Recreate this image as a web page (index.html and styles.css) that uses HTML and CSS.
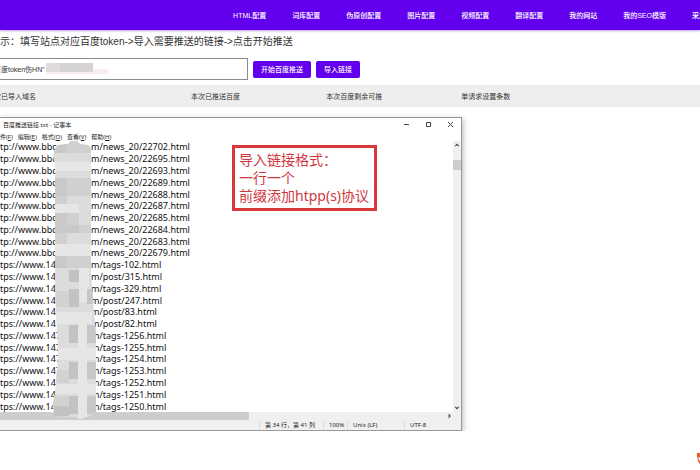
FILE: index.html
```html
<!DOCTYPE html>
<html lang="zh-CN">
  <head>
    <meta charset="UTF-8" />
    <meta name="viewport" content="width=device-width, initial-scale=1.0" />
    <title>百度推送</title>
    <link rel="stylesheet" href="styles.css">
  </head>
  <body>
    <nav class="topbar">
      <a href="#">HTML配置</a>
      <a href="#">词库配置</a>
      <a href="#">伪原创配置</a>
      <a href="#">图片配置</a>
      <a href="#">视频配置</a>
      <a href="#">翻译配置</a>
      <a href="#">我的网站</a>
      <a href="#">我的SEO模版</a>
      <a href="#">采集</a>
    </nav>

    <main class="page">
      <p class="tip">示：填写站点对应百度token-&gt;导入需要推送的链接-&gt;点击开始推送</p>

      <form class="push-form">
        <div class="token-box">
          <input type="text" class="token-input" aria-label="百度token" value="百度token伤HN&quot;" spellcheck="false" />
          <svg class="token-mask" viewBox="0 0 62 14" aria-hidden="true">
            <rect x="0" y="7" width="62" height="5" fill="#f8edf3" />
            <rect x="0" y="1" width="47" height="9" fill="#d6d3d6" />
            <rect x="0" y="1" width="14" height="9" fill="#dedadd" />
          </svg>
        </div>
        <button type="button">开始百度推送</button>
        <button type="button">导入链接</button>
      </form>

      <table class="stats">
        <thead>
          <tr>
            <th>次已导入域名</th>
            <th>本次已推送百度</th>
            <th>本次百度剩余可推</th>
            <th>单请求设置条数</th>
          </tr>
        </thead>
      </table>

      <section class="notepad">
        <header class="titlebar">
          <span class="title">百度推送链接.txt - 记事本</span>
          <button type="button" aria-label="最小化"><svg viewBox="0 0 7 7"><path d="M1 3.500h5" /></svg></button>
          <button type="button" aria-label="最大化"><svg viewBox="0 0 7 7"><path d="M1.500 1.500h4v4h-4z" /></svg></button>
          <button type="button" aria-label="关闭"><svg viewBox="0 0 7 7"><path d="M1 1l5 5M6 1l-5 5" /></svg></button>
        </header>
        <div class="menubar">
          <a href="#">件(<u>F</u>)</a>
          <a href="#">编辑(<u>E</u>)</a>
          <a href="#">格式(<u>O</u>)</a>
          <a href="#">查看(<u>V</u>)</a>
          <a href="#">帮助(<u>H</u>)</a>
        </div>
        <div class="editor">
          <ul class="urls">
            <li><span>tp://www.bbc</span>m/news_20/22702.html</li>
            <li><span>tp://www.bbc</span>m/news_20/22695.html</li>
            <li><span>tp://www.bbc</span>m/news_20/22693.html</li>
            <li><span>tp://www.bbc</span>m/news_20/22689.html</li>
            <li><span>tp://www.bbc</span>m/news_20/22688.html</li>
            <li><span>tp://www.bbc</span>m/news_20/22687.html</li>
            <li><span>tp://www.bbc</span>m/news_20/22685.html</li>
            <li><span>tp://www.bbc</span>m/news_20/22684.html</li>
            <li><span>tp://www.bbc</span>m/news_20/22683.html</li>
            <li><span>tp://www.bbc</span>m/news_20/22679.html</li>
            <li><span>tps://www.14</span>m/tags-102.html</li>
            <li><span>tps://www.14</span>m/post/315.html</li>
            <li><span>tps://www.14</span>m/tags-329.html</li>
            <li><span>tps://www.14</span>m/post/247.html</li>
            <li><span>tps://www.14</span>m/post/83.html</li>
            <li><span>tps://www.14</span>m/post/82.html</li>
            <li><span>tps://www.147</span>m/tags-1256.html</li>
            <li><span>tps://www.147</span>m/tags-1255.html</li>
            <li><span>tps://www.147</span>m/tags-1254.html</li>
            <li><span>tps://www.147</span>m/tags-1253.html</li>
            <li><span>tps://www.147</span>m/tags-1252.html</li>
            <li><span>tps://www.147</span>m/tags-1251.html</li>
            <li><span>tps://www.147</span>m/tags-1250.html</li>
          </ul>
          <div class="note">导入链接格式：<br>一行一个<br>前缀添加htpp(s)协议</div>
          <div class="scroll-y">
            <svg viewBox="0 0 7 7"><path d="M2 4.500L3.500 3L5 4.500" /></svg>
            <i></i>
            <svg viewBox="0 0 7 7"><path d="M2 2.500L3.500 4L5 2.500" /></svg>
          </div>
        </div>
        <div class="scroll-x">
          <i></i>
          <svg viewBox="0 0 7 7"><path d="M3 2L4.500 3.500L3 5" /></svg>
        </div>
        <footer class="statusbar">
          <span>第 34 行，第 41 列</span>
          <span>100%</span>
          <span>Unix (LF)</span>
          <span>UTF-8</span>
        </footer>

        <!-- pixelated strip over the domain names -->
        <svg class="mosaic" viewBox="0 0 50 284" aria-hidden="true">
          <clipPath id="strip">
            <path d="M5 13L8 9L18 8L21 5L27 5L30 8L38 9L41 12V134L42 150L46 200L46 276L40 280L30 283L24 281L4 280L3 268L6 250L8 215L5 150V30L3 20Z" />
          </clipPath>
          <g clip-path="url(#strip)">
            <rect width="50" height="284" fill="#dcdcdc" />
            <path fill="#c9c9c9" d="M0 0h17v17H0zM0 42h17v18H0zM0 77h17v12H0zM0 89h29v8H0zM0 120h17v12H0z" />
            <path fill="#d0d0d0" d="M17 0h25v17H17zM17 42h25v18H17zM0 60h17v8H0zM0 97h17v11H0zM17 77h12v12H17zM29 89h13v8H29zM17 120h25v12H17z" />
            <path fill="#e6e6e6" d="M0 26h42v9H0zM0 68h29v9H0zM0 108h42v12H0zM29 132h10v34H29zM0 176h42v12H0zM0 212h50v12H0zM0 248h50v10H0zM28 188h9v96H28z" />
            <path fill="#c2c2c2" d="M19 134h10v12H19zM19 153h10v18H19zM19 189h9v18H19zM19 226h9v17H19zM19 260h9v18H19zM4 270h15v10H4z" />
            <path fill="#c7c7c7" d="M37 153h7v15H37zM37 189h10v18H37zM37 226h10v17H37zM37 260h10v18H37z" />
            <path fill="#d2d2d2" d="M0 155h19v16H0zM0 234h19v13H0zM0 260h19v10H0z" />
          </g>
        </svg>
      </section>
    </main>

    <svg class="float-icon" viewBox="0 0 4 16" aria-hidden="true">
      <path d="M4 1Q0 0 1 4L2 9L4 12Z" fill="#e2572b" />
      <path d="M4 5L2 6L4 9Z" fill="#fff" />
    </svg>
  </body>
</html>
```
FILE: styles.css
```css
* {
  box-sizing: border-box;
}
body {
  margin: 0;
  font-family: "Liberation Sans", "Noto Sans CJK SC", sans-serif;
  font-size: 7px;
  color: #333;
  background: #fff;
  overflow: hidden;
}
a {
  color: inherit;
  text-decoration: none;
}
button {
  font: inherit;
  border: 0;
  padding: 0;
}
svg {
  display: block;
  fill: none;
  stroke: #444;
}

/* top navigation */
.topbar {
  display: flex;
  gap: 26px;
  height: 30px;
  padding-left: 33.3%;
  align-items: center;
  background: #6200ee;
  box-shadow: 0 1px 2px rgba(98, 0, 238, 0.4);
  color: #fff;
  font-weight: 500;
  white-space: nowrap;
}

.tip {
  margin: 0;
  padding: 4px 0;
  font-size: 10px;
  line-height: 16px;
}

/* token form */
.push-form {
  display: flex;
  align-items: center;
  gap: 5px;
  margin-top: 4px;
}
.token-box {
  position: relative;
  width: 248px;
}
.token-input {
  display: block;
  width: 100%;
  height: 22px;
  padding: 0;
  border: 1px solid #8a8a94;
  border-left: 0;
  font: inherit;
  color: #333;
  text-indent: -6px;
}
.token-mask {
  position: absolute;
  left: 46px;
  top: 4px;
  width: 62px;
  stroke: none;
}
.push-form button {
  height: 17px;
  padding: 0 8px;
  border-radius: 2px;
  background: #6200ee;
  color: #fff;
  font-weight: 500;
}

.stats {
  width: 100%;
  margin-top: 5px;
  border-collapse: collapse;
  table-layout: fixed;
  background: #eee;
}
.stats th {
  width: 19.3%;
  height: 22px;
  padding: 0;
  font-weight: 400;
  text-align: left;
}
.stats th:first-child {
  width: 27.3%;
  text-indent: -6px;
}
.stats th:last-child {
  width: auto;
}

/* notepad window */
.notepad {
  position: relative;
  width: 66%;
  margin-top: 10px;
  border: 1px solid #999;
  border-left: 0;
  background: #fff;
  box-shadow: 1px 2px 6px rgba(0, 0, 0, 0.3);
  color: #222;
  font-family: "Noto Sans", "Noto Sans CJK SC", sans-serif;
  font-size: 6px;
}
.titlebar {
  display: flex;
  align-items: center;
  gap: 15px;
  height: 13px;
  padding: 0 7px 0 3px;
}
.title {
  flex: 1;
}
.titlebar button {
  width: 7px;
  background: transparent;
}
.menubar {
  display: flex;
  align-items: center;
  gap: 5px;
  height: 10px;
}
.editor {
  position: relative;
  display: flex;
  height: 271px;
}
.urls {
  flex: 1;
  display: grid;
  grid-auto-rows: 1fr;
  align-items: center;
  margin: 0;
  padding: 0;
  list-style: none;
  font-size: 9px;
  line-height: 11px;
  color: #111;
}
.urls li {
  display: flex;
}
.urls span {
  width: 91px;
  padding-right: 4px;
}
.note {
  position: absolute;
  left: 232px;
  top: 4px;
  padding: 3px 5px 3px 4px;
  border: 3px solid #d9363a;
  background: #fff;
  color: #d0373c;
  font-size: 14px;
  line-height: 18px;
}

/* scrollbars */
.scroll-y {
  display: flex;
  flex-direction: column;
  width: 8px;
  background: #f0f0f0;
}
.scroll-y i {
  height: 10px;
  margin: 11px 0 auto;
  background: #cdcdcd;
}
.scroll-x {
  display: flex;
  justify-content: space-between;
  height: 8px;
  padding-right: 8px;
  background: #f0f0f0;
}
.scroll-x i {
  width: 55%;
  background: #cdcdcd;
}
.scroll-x svg,
.scroll-y svg {
  width: 8px;
  height: 8px;
}

.statusbar {
  display: grid;
  grid-template-columns: 64px 24px 57px 57px;
  justify-content: end;
  align-items: center;
  height: 10px;
  background: #f0f0f0;
}
.statusbar span {
  padding-left: 5px;
  border-left: 1px solid #ddd;
  line-height: 10px;
}
.mosaic {
  position: absolute;
  left: 50px;
  top: 18px;
  width: 50px;
  stroke: none;
}

.float-icon {
  position: fixed;
  right: 0;
  bottom: 2px;
  width: 4px;
  stroke: none;
}
```
